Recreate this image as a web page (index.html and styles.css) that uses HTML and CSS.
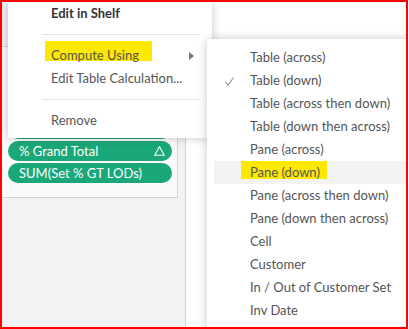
FILE: index.html
```html
<!DOCTYPE html>
<html lang="en">

<head>
    <meta charset="UTF-8">
    <meta name="viewport" content="width=device-width, initial-scale=1.0">
    <title>Compute Using</title>
    <link rel="stylesheet" href="styles.css">
</head>

<body>
    <div class="frame">
        <div class="workspace">
            <aside class="pane">
                <div class="shelf">
                    <div class="pill"></div>
                    <div class="pill"></div>
                    <div class="pill">
                        <span>% Grand Total</span>
                        <svg class="delta" width="11" height="10" viewBox="0 0 11 10">
                            <polygon points="5.5,0.8 10.3,9.3 0.7,9.3" fill="none" stroke="#fff" stroke-width="1.1" />
                        </svg>
                    </div>
                    <div class="pill"><span>SUM(Set % GT LODs)</span></div>
                </div>
            </aside>
            <div class="canvas"></div>
        </div>

        <ul class="menu context-menu">
            <li class="item strong">Edit in Shelf</li>
            <li class="sep"></li>
            <li class="item has-sub"><span class="marker mark-compute">Compute Using</span><i class="arrow"></i></li>
            <li class="item">Edit Table Calculation...</li>
            <li class="sep"></li>
            <li class="item">Remove</li>
        </ul>

        <ul class="menu submenu">
            <li class="item">Table (across)</li>
            <li class="item checked">
                <svg class="check" width="9" height="9" viewBox="0 0 9 9">
                    <polyline points="0.5,5 3,8.3 8.5,0.5" fill="none" stroke="#777" stroke-width="1" />
                </svg>
                Table (down)
            </li>
            <li class="item">Table (across then down)</li>
            <li class="item">Table (down then across)</li>
            <li class="item">Pane (across)</li>
            <li class="item hover"><span class="marker mark-pane">Pane (down)</span></li>
            <li class="item">Pane (across then down)</li>
            <li class="item">Pane (down then across)</li>
            <li class="item">Cell</li>
            <li class="item">Customer</li>
            <li class="item">In / Out of Customer Set</li>
            <li class="item">Inv Date</li>
        </ul>
    </div>
</body>

</html>
```

FILE: styles.css
```css
body {
    margin: 0;
    background-color: white;
    font-family: Lato, "Liberation Sans", sans-serif;
}

.frame {
    position: relative;
    width: 408px;
    height: 329px;
    box-sizing: border-box;
    border: 2px solid #ff0000;
    overflow: hidden;
}

.workspace {
    display: flex;
    height: 100%;
}

.pane {
    width: 184px;
    box-sizing: border-box;
    border-right: 1px solid #d3d3d3;
    background-color: #f2f2f2;
}

.canvas {
    flex: 1;
    background-color: white;
}

.shelf {
    margin-top: 44px;
    width: 176px;
    box-sizing: border-box;
    border: 1px solid #d4d4d4;
    border-left: none;
    background-color: #fafafa;
    padding: 50px 0 14px 6px;
    display: flex;
    flex-direction: column;
    gap: 2px;
}

.pill {
    width: 164px;
    height: 20px;
    box-sizing: border-box;
    border-radius: 10px;
    background-color: #1aa77a;
    color: white;
    font-size: 13px;
    padding: 0 7px 0 11px;
    display: flex;
    align-items: center;
    justify-content: space-between;
}

.menu {
    position: absolute;
    margin: 0;
    list-style: none;
    background-color: white;
    box-shadow: 0 0 9px rgba(0, 0, 0, 0.22);
    font-size: 13px;
    color: #555;
}

.context-menu {
    left: 6px;
    top: 0;
    width: 204px;
    padding: 0 0 6px 0;
    z-index: 1;
}

.submenu {
    left: 205px;
    top: 37px;
    width: 215px;
    height: 300px;
    padding: 7px 0 0 7px;
    z-index: 2;
}

.item {
    position: relative;
    height: 23px;
    line-height: 23px;
    white-space: nowrap;
}

.context-menu .item {
    padding-left: 43px;
}

.submenu .item {
    padding-left: 36px;
}

.strong {
    color: #333;
    font-weight: bold;
}

.sep {
    height: 1px;
    margin: 9px 11px 9px 34px;
    background-color: #e3e3e3;
}

.arrow {
    position: absolute;
    left: 181px;
    top: 8px;
    border-left: 5px solid #777;
    border-top: 4px solid transparent;
    border-bottom: 4px solid transparent;
}

.hover {
    background-color: #f3f3f3;
}

.check {
    position: absolute;
    left: 11px;
    top: 8px;
}

.marker {
    position: relative;
    display: inline-block;
    isolation: isolate;
}

.marker::before {
    content: "";
    position: absolute;
    z-index: -1;
    background-color: #fde800;
}

.mark-compute::before {
    left: -6px;
    right: -13px;
    top: -3px;
    height: 20px;
}

.mark-pane::before {
    left: -9px;
    right: -7px;
    top: 0;
    height: 18px;
}
```
